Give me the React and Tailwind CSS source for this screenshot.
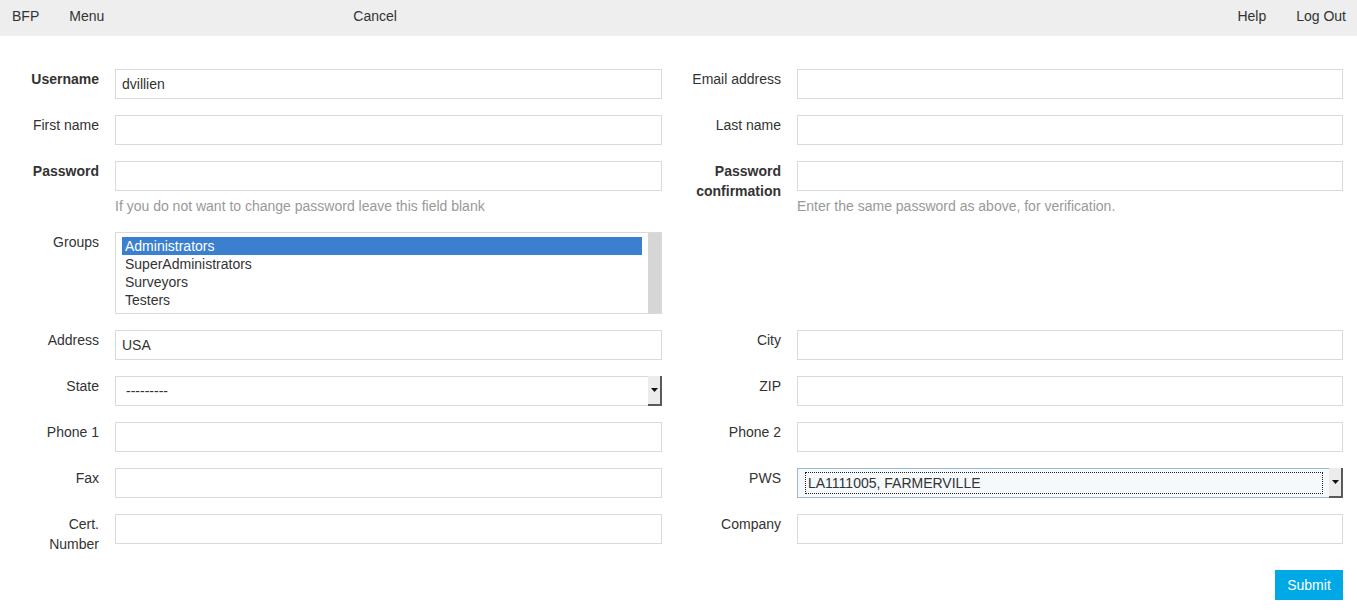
import React from "react";

const font = { fontFamily: '"Liberation Sans", Arial, Helvetica, sans-serif' };

function Input({ value }) {
  return (
    <div className="w-full shrink-0 h-[30px] border border-[#dadada] bg-white pl-[6px] flex items-center text-[14px] text-[#333]">
      {value}
    </div>
  );
}

function Arrow() {
  return (
    <div className="w-[14px] self-stretch my-[-1px] mr-[-1px] bg-[#ececec] border-r-2 border-b-2 border-[#5a5a5a] flex items-center justify-center">
      <svg width="7" height="4" viewBox="0 0 7 4">
        <path d="M0 0 L7 0 L3.5 4 Z" fill="#111" />
      </svg>
    </div>
  );
}

function Cell({ label, bold, left, children, help }) {
  return (
    <div className={left ? "w-[678px] flex pr-4" : "flex-1 flex pr-[14px]"}>
      <div
        className={
          (left ? "w-[99px] pl-4" : "w-[103px] pl-2") +
          " shrink-0 text-right text-[14px] leading-5 text-[#333] " +
          (bold ? "font-bold" : "")
        }
      >
        {label}
      </div>
      <div className="flex-1 ml-4 flex flex-col">
        {children}
        {help && (
          <div className="mt-[5px] text-[14px] leading-5 text-[#999]">{help}</div>
        )}
      </div>
    </div>
  );
}

function Row({ children }) {
  return <div className="flex mb-4">{children}</div>;
}

export default function App() {
  return (
    <div className="min-h-[616px] bg-white" style={font}>
      <div className="h-9 bg-[#eeeeee] flex text-[14px] leading-5 text-[#333] pt-[6px]">
        <span className="ml-3">BFP</span>
        <span className="ml-[30px]">Menu</span>
        <span className="ml-[249px]">Cancel</span>
        <span className="ml-auto">Help</span>
        <span className="ml-[30px] mr-[11px]">Log Out</span>
      </div>

      <div className="pt-[33px]">
        <Row>
          <Cell left label="Username" bold>
            <Input value="dvillien" />
          </Cell>
          <Cell label="Email address">
            <Input />
          </Cell>
        </Row>
        <Row>
          <Cell left label="First name">
            <Input />
          </Cell>
          <Cell label="Last name">
            <Input />
          </Cell>
        </Row>
        <Row>
          <Cell left label="Password" bold help="If you do not want to change password leave this field blank">
            <Input />
          </Cell>
          <Cell label="Password confirmation" bold help="Enter the same password as above, for verification.">
            <Input />
          </Cell>
        </Row>
        <Row>
          <Cell left label="Groups">
            <div className="w-full h-[82px] shrink-0 border border-[#dadada] bg-white flex">
              <div className="flex-1 pl-[6px] pr-[6px] pt-[4px] text-[14px] leading-[18px] text-[#333]">
                <div className="bg-[#3a80cf] text-white pl-[3px]">Administrators</div>
                <div className="pl-[3px]">SuperAdministrators</div>
                <div className="pl-[3px]">Surveyors</div>
                <div className="pl-[3px]">Testers</div>
              </div>
              <div className="w-[13px] bg-[#d6d6d6]"></div>
            </div>
          </Cell>
          <div className="flex-1"></div>
        </Row>
        <Row>
          <Cell left label="Address">
            <Input value="USA" />
          </Cell>
          <Cell label="City">
            <Input />
          </Cell>
        </Row>
        <Row>
          <Cell left label="State">
            <div className="w-full shrink-0 h-[30px] border border-[#dadada] bg-white flex items-center text-[14px] text-[#333]">
              <span className="flex-1 pl-[10px]">---------</span>
              <Arrow />
            </div>
          </Cell>
          <Cell label="ZIP">
            <Input />
          </Cell>
        </Row>
        <Row>
          <Cell left label="Phone 1">
            <Input />
          </Cell>
          <Cell label="Phone 2">
            <Input />
          </Cell>
        </Row>
        <Row>
          <Cell left label="Fax">
            <Input />
          </Cell>
          <Cell label="PWS">
            <div className="w-full shrink-0 h-[30px] border border-[#9bbacd] bg-[#f5f9fc] flex items-center text-[14px] text-[#333]">
              <div className="flex-1 h-[22px] ml-[7px] mr-[6px] border border-dotted border-[#222] flex items-center pl-[2px]">
                LA1111005, FARMERVILLE
              </div>
              <Arrow />
            </div>
          </Cell>
        </Row>
        <Row>
          <Cell left label="Cert. Number">
            <Input />
          </Cell>
          <Cell label="Company">
            <Input />
          </Cell>
        </Row>
        <div className="flex justify-end pr-[14px]">
          <button className="w-[68px] h-[30px] bg-[#00a8e6] text-white text-[14px]">Submit</button>
        </div>
      </div>
    </div>
  );
}
